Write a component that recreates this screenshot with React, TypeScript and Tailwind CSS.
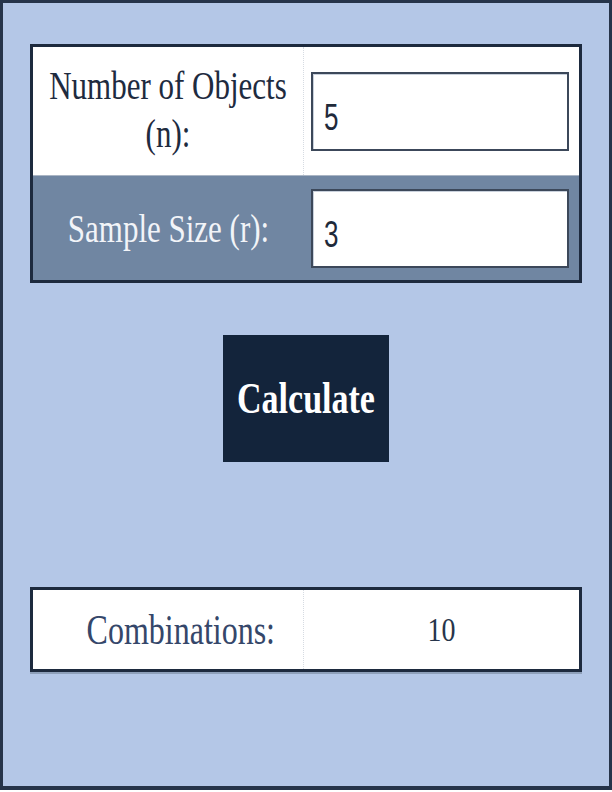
const serif = { fontFamily: '"Liberation Serif", "Times New Roman", serif' };

function Field({ value }: { value: string }) {
  return (
    <div className="flex h-[79px] w-full items-center border-2 border-[#3c485a] bg-white pl-[11px] pt-[12px] shadow-[inset_1px_1px_0_#c9d1dc]">
      <span
        className="inline-block origin-center scale-y-[1.45] text-[26px] leading-none text-[#1f2a3a]"
        style={{ fontFamily: '"Liberation Sans", Arial, sans-serif' }}
      >
        {value}
      </span>
    </div>
  );
}

export default function App() {
  return (
    <div className="h-[792px] w-[612px] overflow-hidden">
      <div
        className="flex h-[790px] w-full flex-col items-center border-[3px] border-b-[4px] border-[#26344a] bg-[#b4c7e7]"
        style={serif}
      >
        {/* Inputs table */}
        <div className="mt-[41px] w-[552px] border-[3px] border-[#1d2a3e]">
          <div className="grid h-[128px] grid-cols-[271px_1fr] bg-white">
            <div className="flex items-center justify-center border-r border-dotted border-[#d6dbe2] pb-[4px]">
              <span className="inline-block scale-y-[1.3] text-center text-[31px] leading-[37px] text-[#1e2b3f]">
                Number of Objects
                <br />
                (n):
              </span>
            </div>
            <div className="flex items-center pl-[7px] pr-[10px]">
              <Field value="5" />
            </div>
          </div>
          <div className="grid h-[105px] grid-cols-[271px_1fr] border-t border-[#aab5c4] bg-[#7086a2]">
            <div className="flex items-center justify-center">
              <span className="inline-block scale-y-[1.3] text-[31px] leading-none text-[#f2f4f8]">
                Sample Size (r):
              </span>
            </div>
            <div className="flex items-center pl-[7px] pr-[10px]">
              <Field value="3" />
            </div>
          </div>
        </div>

        {/* Calculate button */}
        <button className="mt-[52px] flex h-[127px] w-[166px] items-center justify-center bg-[#13243b]">
          <span className="inline-block scale-y-[1.3] text-[34px] font-bold leading-none text-white">
            Calculate
          </span>
        </button>

        {/* Result */}
        <div className="mt-[125px] grid h-[85px] w-[552px] grid-cols-[271px_1fr] border-[3px] border-[#1d2a3e] bg-white shadow-[0_2px_0_#8ea0ba]">
          <div className="flex items-center justify-end border-r border-dotted border-[#d6dbe2] pr-[28px]">
            <span className="inline-block scale-y-[1.3] text-[32px] leading-none text-[#35476a]">
              Combinations:
            </span>
          </div>
          <div className="flex items-center justify-center">
            <span className="inline-block scale-y-[1.2] text-[28px] leading-none text-[#27354b]">
              10
            </span>
          </div>
        </div>
      </div>
    </div>
  );
}
